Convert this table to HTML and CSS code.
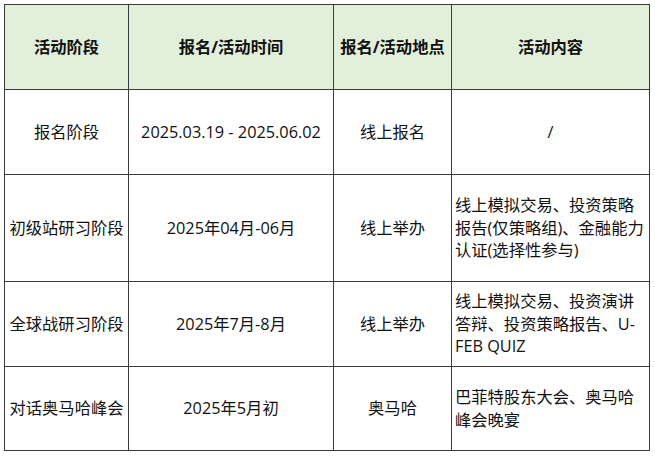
FILE: index.html
```html
<!DOCTYPE html>
<html lang="zh-CN">
<head>
<meta charset="utf-8">
<link rel="stylesheet" href="styles.css">
</head>
<body>
<table class="sched">
  <colgroup>
    <col class="c1"><col class="c2"><col class="c3"><col class="c4">
  </colgroup>
  <thead>
    <tr class="r-head">
      <th>活动阶段</th>
      <th>报名/活动时间</th>
      <th>报名/活动地点</th>
      <th>活动内容</th>
    </tr>
  </thead>
  <tbody>
    <tr class="r-std">
      <td>报名阶段</td>
      <td>2025.03.19 - 2025.06.02</td>
      <td>线上报名</td>
      <td class="mid">/</td>
    </tr>
    <tr class="r-tall">
      <td>初级站研习阶段</td>
      <td>2025年04月-06月</td>
      <td>线上举办</td>
      <td class="txt">线上模拟交易、投资策略<br>报告(仅策略组)、金融能力<br>认证(选择性参与)</td>
    </tr>
    <tr class="r-std">
      <td>全球战研习阶段</td>
      <td>2025年7月-8月</td>
      <td>线上举办</td>
      <td class="txt">线上模拟交易、投资演讲<br>答辩、投资策略报告、U-<br>FEB QUIZ</td>
    </tr>
    <tr class="r-last">
      <td>对话奥马哈峰会</td>
      <td>2025年5月初</td>
      <td>奥马哈</td>
      <td class="txt">巴菲特股东大会、奥马哈<br>峰会晚宴</td>
    </tr>
  </tbody>
</table>
</body>
</html>
```
FILE: styles.css
```css
html, body {
  margin: 0;
  padding: 0;
  background: #ffffff;
}
body {
  padding: 4px 0 0 4px;
  font-family: "Open Sans", "Noto Sans CJK SC", sans-serif;
  color: #111111;
}
.sched {
  border-collapse: collapse;
  table-layout: fixed;
  width: 645px;
}
.c1 { width: 124px; }
.c2 { width: 205px; }
.c3 { width: 118px; }
.c4 { width: 198px; }
.sched th,
.sched td {
  border: 1px solid #3c3c3c;
  font-size: 16.3px;
  line-height: 22.5px;
  text-align: center;
  vertical-align: middle;
  padding: 0;
  white-space: nowrap;
}
.sched th {
  background: #e2efda;
  font-weight: 700;
}
.r-head { height: 85px; }
.r-std { height: 85px; }
.r-tall { height: 107px; }
.r-last { height: 84px; }
.sched td.txt {
  text-align: left;
  padding-left: 3px;
  padding-top: 0;
}
```
